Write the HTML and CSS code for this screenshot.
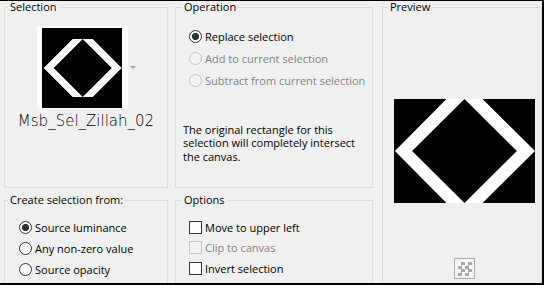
FILE: index.html
```html
<!DOCTYPE HTML>
<html>
	<head>
		<title>Load Selection From Disk</title>
		<meta charset="utf-8">
		<link rel="stylesheet" href="styles.css">
	</head>
	<body>
	<div class="dialog">
		<fieldset class="group group-selection">
			<legend>Selection</legend>
			<div class="preset-combo">
				<div class="preset-thumb">
					<svg width="80" height="80" viewBox="0 0 80 80">
						<rect width="80" height="80" fill="#000"/>
						<path transform="translate(1.7 11)" fill="#fff" fill-rule="evenodd" d="M0 29 L29 0 L49 0 L78 29 L49 58 L29 58 Z M10 29 L39 58 L68 29 L39 0 Z"/>
					</svg>
				</div>
				<span class="combo-arrow"></span>
			</div>
			<div class="preset-name">Msb_Sel_Zillah_02</div>
		</fieldset>

		<fieldset class="group group-operation">
			<legend>Operation</legend>
			<div class="rows">
				<label class="option"><input type="radio" name="op" checked> Replace selection</label>
				<label class="option disabled"><input type="radio" name="op" disabled> Add to current selection</label>
				<label class="option disabled"><input type="radio" name="op" disabled> Subtract from current selection</label>
			</div>
			<p class="note">The original rectangle for this<br>selection will completely intersect<br>the canvas.</p>
		</fieldset>

		<fieldset class="group group-preview">
			<legend>Preview</legend>
			<svg class="preview-image" width="141" height="104" viewBox="0 0 78 58" preserveAspectRatio="none">
				<rect width="78" height="58" fill="#000"/>
				<path fill="#fff" fill-rule="evenodd" d="M0.5 29 L29 0 L49 0 L78 29 L49 58 L29 58 Z M10 29 L39 58 L68 29 L39 0 Z"/>
			</svg>
			<button class="bg-toggle"><span class="checker"></span></button>
		</fieldset>

		<fieldset class="group group-create">
			<legend>Create selection from:</legend>
			<div class="rows">
				<label class="option"><input type="radio" name="src" checked> Source luminance</label>
				<label class="option"><input type="radio" name="src"> Any non-zero value</label>
				<label class="option"><input type="radio" name="src"> Source opacity</label>
			</div>
		</fieldset>

		<fieldset class="group group-options">
			<legend>Options</legend>
			<div class="rows">
				<label class="option"><input type="checkbox"> Move to upper left</label>
				<label class="option disabled"><input type="checkbox" disabled> Clip to canvas</label>
				<label class="option"><input type="checkbox"> Invert selection</label>
			</div>
		</fieldset>
	</div>
	</body>
</html>
```

FILE: styles.css
```css
html{
	background: #f0f0f0;
}

body{
	margin: 0;
	width: 544px;
	height: 285px;
	box-sizing: border-box;
	overflow: hidden;
	background: #f0f0f0;
	border-top: 1px solid #000;
	border-right: 2px solid #000;
	border-bottom: 2px solid #000;
	font: 11px "Open Sans", sans-serif;
	color: #000;
}

.dialog{
	display: grid;
	grid-template-columns: 164px 198px 162px;
	grid-template-rows: 187px 89px;
	column-gap: 7px;
	row-gap: 6px;
	padding-left: 4px;
}

.group{
	margin: 0;
	padding: 0;
	min-width: 0;
	border: 1px solid #dcdcdc;
}

.group legend{
	margin-left: 3px;
	padding: 0 2px;
	line-height: 12px;
}

.group-operation legend,
.group-options legend{
	margin-left: 6px;
}

.group-preview legend{
	margin-left: 5px;
}

.group-preview{
	grid-column: 3;
	grid-row: 1 / 3;
	margin-left: 2px;
	border-bottom: none;
}

.group-create,
.group-options{
	border-bottom: none;
}

/* selection preset */
.preset-combo{
	display: flex;
	align-items: center;
	justify-content: center;
	gap: 2px;
	margin-top: 13px;
}

.preset-thumb{
	background: #fff;
	padding: 2px 6px 1px 5px;
}

.preset-thumb svg,
.preview-image{
	display: block;
}

.combo-arrow{
	border: 3px solid transparent;
	border-top-color: #a0a0a0;
	border-bottom: none;
}

.preset-name{
	margin-top: 3px;
	text-align: center;
	font-family: "DejaVu Sans", sans-serif;
	font-weight: 200;
	font-size: 15px;
	line-height: 19px;
	color: #000;
}

/* radio and check rows */
.option{
	display: flex;
	align-items: center;
	gap: 3px;
	height: 21px;
	margin-left: 14px;
	white-space: nowrap;
}

.group-operation .option{
	height: 22px;
	margin-left: 13px;
}

.group-operation .rows{
	margin-top: 12px;
}

.group-create .rows,
.group-options .rows{
	margin-top: 11px;
}

.group-options .option{
	height: 20.5px;
	margin-left: 13px;
}

.option input{
	appearance: none;
	-webkit-appearance: none;
	margin: 0;
	width: 13px;
	height: 13px;
	flex: none;
	border: 1px solid #333;
	background: #fff;
}

.option input[type="radio"]{
	border-radius: 50%;
}

.option input[type="radio"]:checked{
	background: radial-gradient(circle, #333 0 3.3px, #fff 3.9px);
}

.option.disabled{
	color: #838383;
}

.option input:disabled{
	border-color: #c4c4c4;
	background: #f3f3f3;
}

.note{
	margin: 32px 0 0 7px;
	line-height: 13.4px;
}

/* preview */
.preview-image{
	margin: 86px 0 0 11px;
}

.bg-toggle{
	display: flex;
	align-items: center;
	justify-content: center;
	margin: 55px 0 0 71px;
	padding: 0;
	width: 21px;
	height: 21px;
	border: 1px solid #adadad;
	background: #f4f4f4;
}

.checker{
	width: 14px;
	height: 14px;
	background: conic-gradient(#a9a9a9 25%, #fff 0 50%, #a9a9a9 0 75%, #fff 0);
	background-size: 7px 7px;
}
```
